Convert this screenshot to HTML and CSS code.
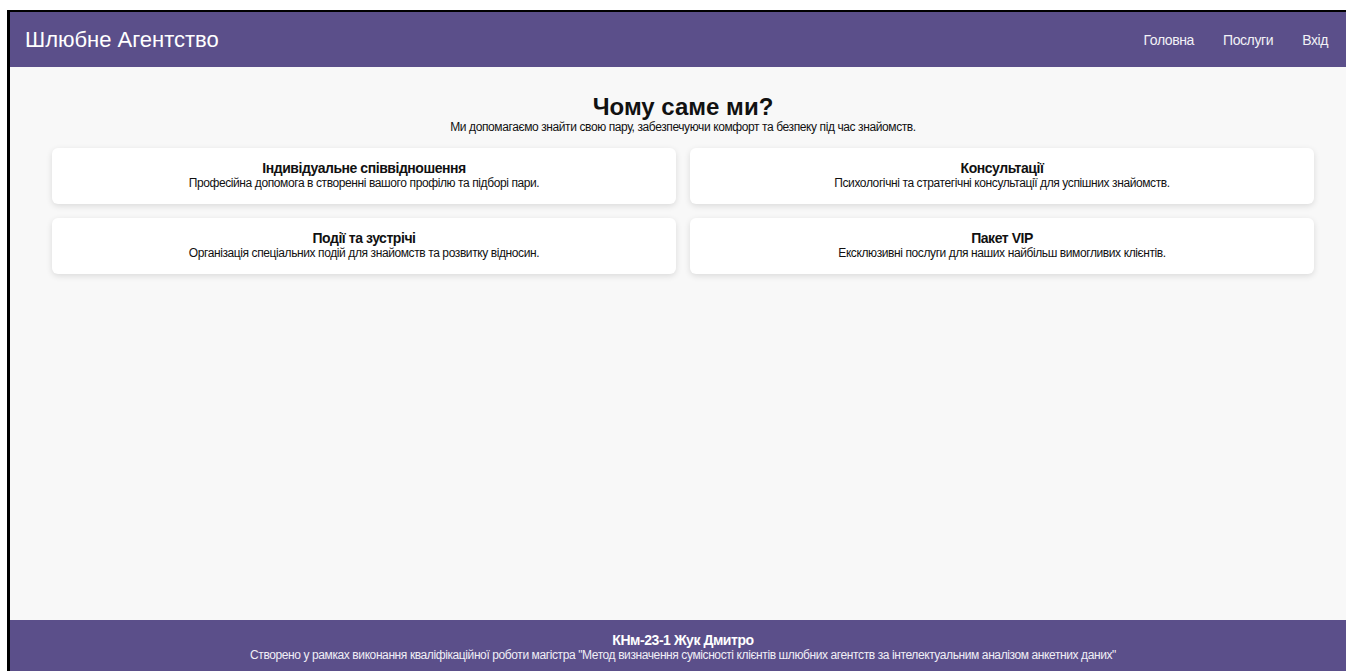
FILE: index.html
```html
<!DOCTYPE html>
<html lang="uk">
<head>
<meta charset="utf-8">
<title>Шлюбне Агентство</title>
<link rel="stylesheet" href="styles.css">
</head>
<body>
<div class="frame">
  <header class="topbar">
    <div class="brand">Шлюбне Агентство</div>
    <nav class="nav">
      <a href="#">Головна</a>
      <a href="#">Послуги</a>
      <a href="#">Вхід</a>
    </nav>
  </header>

  <main class="content">
    <section class="intro">
      <h1>Чому саме ми?</h1>
      <p>Ми допомагаємо знайти свою пару, забезпечуючи комфорт та безпеку під час знайомств.</p>
    </section>

    <section class="cards">
      <div class="card">
        <h3>Індивідуальне співвідношення</h3>
        <p>Професійна допомога в створенні вашого профілю та підборі пари.</p>
      </div>
      <div class="card">
        <h3>Консультації</h3>
        <p>Психологічні та стратегічні консультації для успішних знайомств.</p>
      </div>
      <div class="card">
        <h3>Події та зустрічі</h3>
        <p>Організація спеціальних подій для знайомств та розвитку відносин.</p>
      </div>
      <div class="card">
        <h3>Пакет VIP</h3>
        <p>Ексклюзивні послуги для наших найбільш вимогливих клієнтів.</p>
      </div>
    </section>
  </main>

  <footer class="footer">
    <div class="footer-title">КНм-23-1 Жук Дмитро</div>
    <div class="footer-text">Створено у рамках виконання кваліфікаційної роботи магістра "Метод визначення сумісності клієнтів шлюбних агентств за інтелектуальним аналізом анкетних даних"</div>
  </footer>
</div>
</body>
</html>
```

FILE: styles.css
```css
html, body {
  margin: 0;
  padding: 0;
  background: #ffffff;
  overflow: hidden;
}

body {
  font-family: "Liberation Sans", Arial, sans-serif;
  color: #111;
  padding: 10px 0 0 7px;
}

.frame {
  width: 1346px;
  height: 659px;
  border-top: 2px solid #000;
  border-left: 3px solid #000;
  box-sizing: content-box;
  display: flex;
  flex-direction: column;
  background: #f8f8f8;
}

.topbar {
  height: 55px;
  flex-shrink: 0;
  background: #5b4f8a;
  display: flex;
  align-items: center;
  justify-content: space-between;
  padding: 0 28px 0 15px;
  color: #fff;
}

.brand {
  font-size: 22px;
}

.nav {
  display: flex;
  gap: 29px;
}

.nav a {
  color: #f2f2f6;
  text-decoration: none;
  font-size: 14px;
  letter-spacing: -0.4px;
}

.content {
  flex: 1;
  padding: 0 42px;
}

.intro {
  text-align: center;
  padding-top: 26px;
}

.intro h1 {
  margin: 0;
  font-size: 24px;
  line-height: 27px;
  font-weight: bold;
}

.intro p {
  margin: 0;
  font-size: 12px;
  line-height: 14px;
  letter-spacing: -0.4px;
}

.cards {
  margin-top: 14px;
  display: grid;
  grid-template-columns: 1fr 1fr;
  gap: 14px;
}

.card {
  background: #fff;
  border-radius: 6px;
  box-shadow: 0 2px 6px rgba(0, 0, 0, 0.12);
  text-align: center;
  padding: 12px 10px 14px;
  height: 56px;
  box-sizing: border-box;
}

.card h3 {
  margin: 0;
  font-size: 14px;
  line-height: 16px;
  font-weight: bold;
  letter-spacing: -0.45px;
}

.card p {
  margin: 0;
  font-size: 12px;
  line-height: 14px;
  letter-spacing: -0.4px;
}

.footer {
  flex-shrink: 0;
  background: #5b4f8a;
  color: #fff;
  text-align: center;
  padding: 12px 10px 9px;
  height: 51px;
  box-sizing: border-box;
}

.footer-title {
  font-size: 14px;
  line-height: 16px;
  font-weight: bold;
  letter-spacing: -0.45px;
}

.footer-text {
  font-size: 12px;
  line-height: 14px;
  color: #f0eef6;
  letter-spacing: -0.4px;
}
```
